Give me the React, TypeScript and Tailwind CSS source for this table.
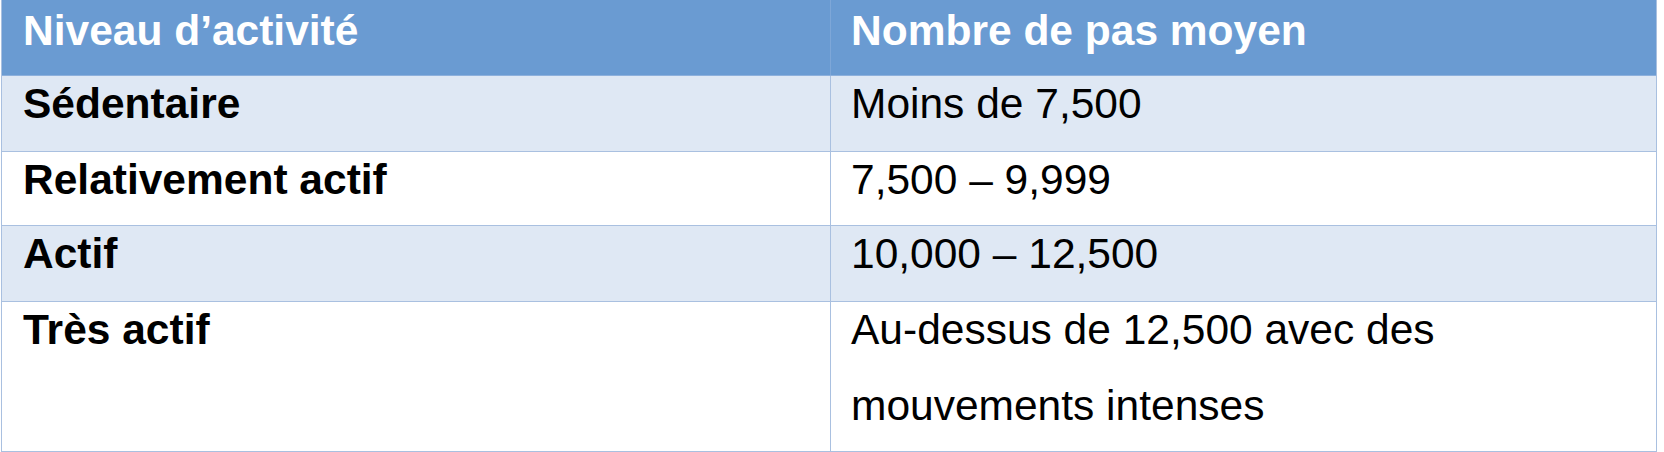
import React from "react";

const rows: { a: string; b: string[]; bg: string; h: string }[] = [
  { a: "Sédentaire", b: ["Moins de 7,500"], bg: "bg-[#dfe8f4]", h: "h-[76px]" },
  { a: "Relativement actif", b: ["7,500 – 9,999"], bg: "bg-white", h: "h-[74px]" },
  { a: "Actif", b: ["10,000 – 12,500"], bg: "bg-[#dfe8f4]", h: "h-[76px]" },
  {
    a: "Très actif",
    b: ["Au-dessus de 12,500 avec des", "mouvements intenses"],
    bg: "bg-white",
    h: "h-[149px]",
  },
];

export default function App() {
  return (
    <div
      className="w-[1664px] h-[452px] bg-white text-[42.5px] text-black"
      style={{ fontFamily: '"Liberation Sans", Arial, sans-serif' }}
    >
      <div className="ml-[1px] w-[1656px] border-l border-r border-b border-[#a9c0e0]">
        <div className="flex h-[76px] bg-[#6a9bd2] border-b border-[#8db0dc] text-white font-bold">
          <div className="w-[829px] border-r border-[#7ea7d8] pl-[21px] pt-[6px] leading-[49px]">
            Niveau d’activité
          </div>
          <div className="flex-1 pl-[20px] pt-[6px] leading-[49px]">Nombre de pas moyen</div>
        </div>
        {rows.map((r, i) => (
          <div
            key={i}
            className={`flex ${r.h} ${r.bg} ${i < rows.length - 1 ? "border-b border-[#a9c0e0]" : ""}`}
          >
            <div className="w-[829px] border-r border-[#a9c0e0] pl-[21px] pt-[3px] font-bold leading-[49px]">
              {r.a}
            </div>
            <div className="flex-1 pl-[20px] pt-[3px]">
              {r.b.map((t, j) => (
                <div key={j} className={`leading-[49px] ${j > 0 ? "mt-[27px]" : ""}`}>
                  {t}
                </div>
              ))}
            </div>
          </div>
        ))}
      </div>
    </div>
  );
}
